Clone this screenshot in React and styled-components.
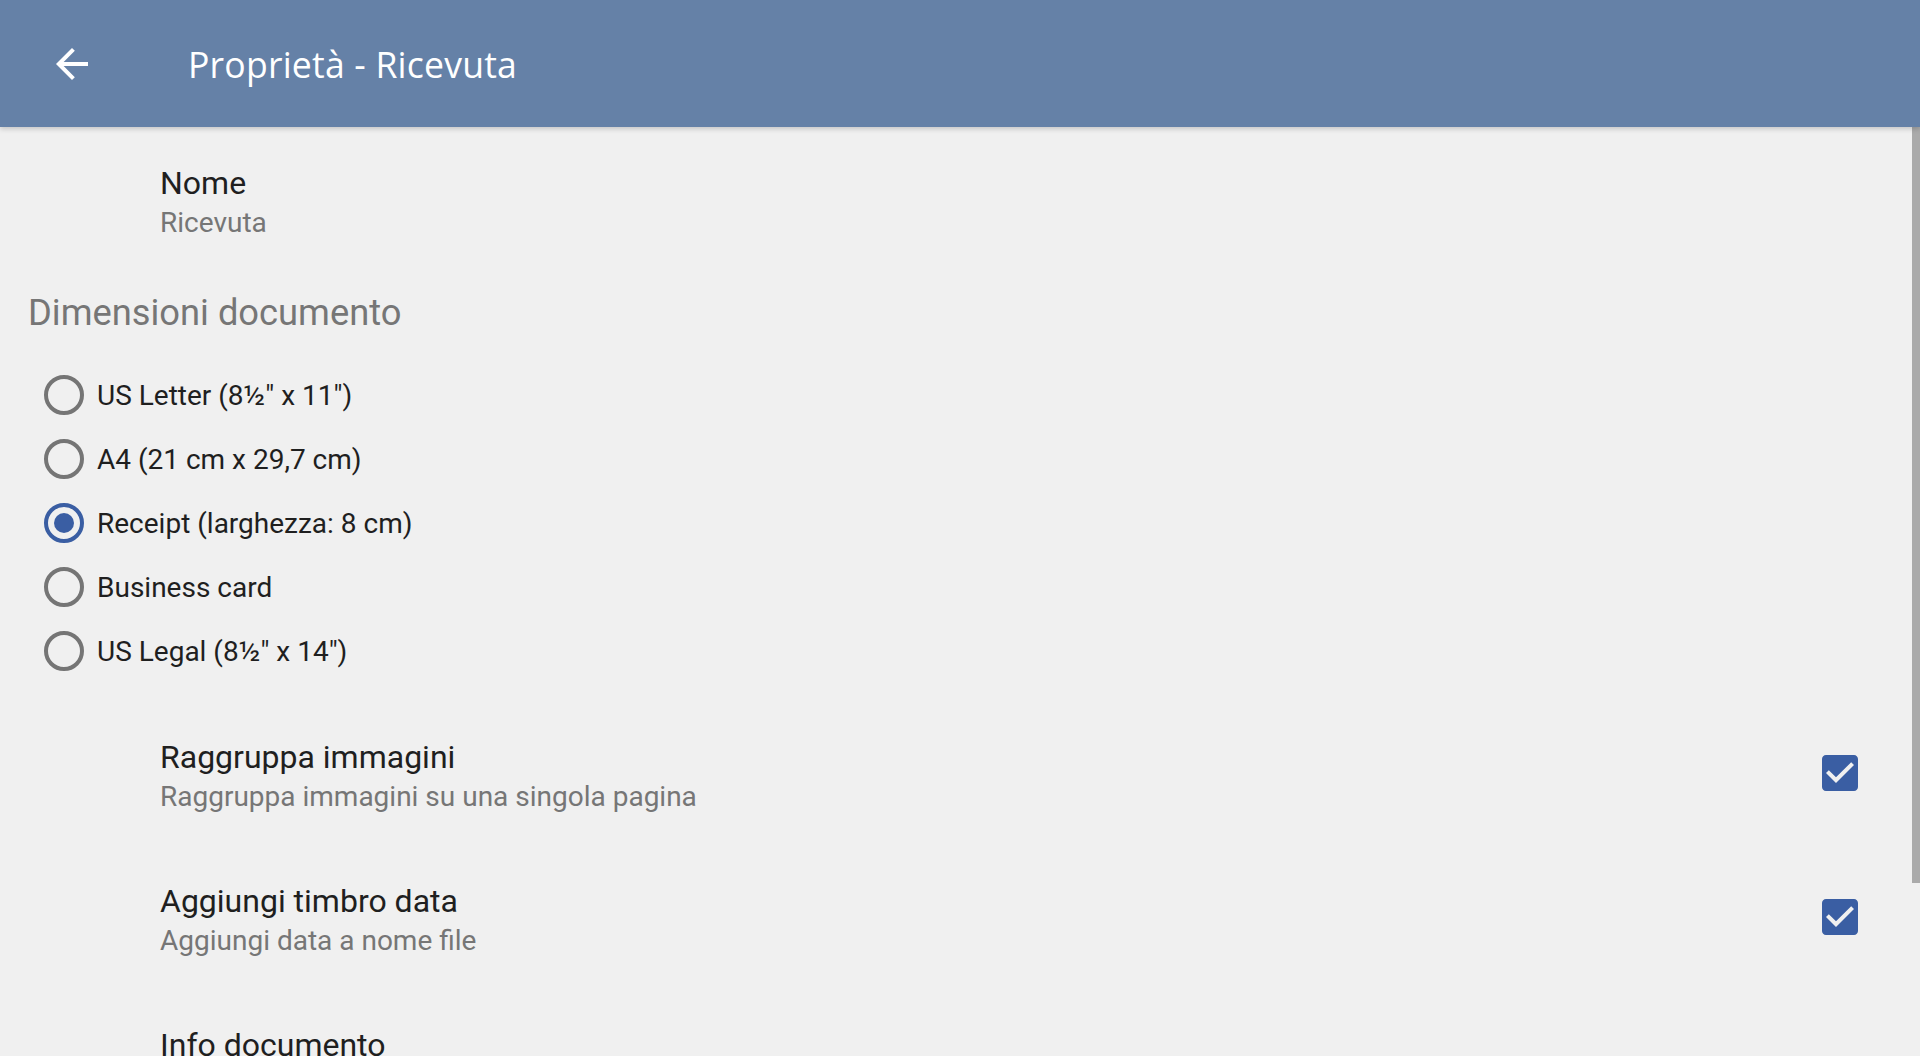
import React from "react";
import styled, { createGlobalStyle } from "styled-components";

const GlobalStyle = createGlobalStyle`
  html, body {
    margin: 0;
    padding: 0;
    height: 100%;
    overflow: hidden;
    background: #f0f0f0;
  }
  #root {
    height: 100%;
  }
`;

const Screen = styled.div`
  height: 1056px;
  display: flex;
  flex-direction: column;
  background: #f0f0f0;
  font-family: Roboto, "Noto Sans", sans-serif;
  overflow: hidden;
`;

const Toolbar = styled.header`
  height: 127px;
  flex-shrink: 0;
  display: flex;
  align-items: center;
  background: #6581a7;
  box-shadow: 0 2px 5px rgba(0, 0, 0, 0.18);
  position: relative;
  z-index: 2;
`;

const BackButton = styled.button`
  width: 48px;
  height: 48px;
  margin-left: 48px;
  padding: 0;
  border: 0;
  background: transparent;
  display: flex;
  align-items: center;
  justify-content: center;
  svg {
    width: 48px;
    height: 48px;
    fill: #ffffff;
  }
`;

const Title = styled.h1`
  margin: 0 0 0 92px;
  font-family: "Open Sans", sans-serif;
  font-weight: 400;
  font-size: 35.6px;
  color: #ffffff;
  letter-spacing: 0.2px;
`;

const Body = styled.div`
  flex: 1;
  display: flex;
  min-height: 0;
`;

const List = styled.main`
  flex: 1;
  display: flex;
  flex-direction: column;
  & > * {
    flex-shrink: 0;
  }
`;

const Scrollbar = styled.div`
  width: 8px;
  align-self: flex-start;
  height: 756px;
  background: #aaaaaa;
`;

const PrefRow = styled.div`
  display: flex;
  align-items: center;
  padding: ${(p) => (p.$top ? "36px 48px 0 160px" : "32px 48px 32px 160px")};
  min-height: ${(p) => (p.$top ? "0" : "80px")};
`;

const PrefText = styled.div`
  flex: 1;
  align-self: stretch;
  display: flex;
  flex-direction: column;
`;

const PrefTitle = styled.div`
  font-size: 32px;
  line-height: 40px;
  color: #1f1f1f;
`;

const PrefSummary = styled.div`
  font-size: 28px;
  line-height: 40px;
  color: #767676;
`;

const Category = styled.div`
  padding: 46px 0 0 28px;
  font-size: 36.3px;
  line-height: 48px;
  color: #767676;
`;

const RadioGroup = styled.div`
  display: flex;
  flex-direction: column;
  padding: 26px 0 22px 44px;
`;

const RadioRow = styled.label`
  height: 64px;
  display: flex;
  align-items: center;
  gap: 13px;
  font-size: 28px;
  color: #1f1f1f;
`;

const RadioCircle = styled.span`
  width: 40px;
  height: 40px;
  box-sizing: border-box;
  border-radius: 50%;
  border: 4px solid ${(p) => (p.$checked ? "#3a5ea3" : "#757575")};
  display: flex;
  align-items: center;
  justify-content: center;
  &::after {
    content: "";
    width: 20px;
    height: 20px;
    border-radius: 50%;
    background: ${(p) => (p.$checked ? "#3a5ea3" : "transparent")};
  }
`;

const CheckIcon = styled.svg`
  width: 48px;
  height: 48px;
  margin-top: -8px;
  fill: #3a5ea3;
`;

const sizes = [
  'US Letter (8½" x 11")',
  "A4 (21 cm x 29,7 cm)",
  "Receipt (larghezza: 8 cm)",
  "Business card",
  'US Legal (8½" x 14")',
];

const Checkbox = () => (
  <CheckIcon viewBox="0 0 24 24">
    <path d="M19 3H5c-1.11 0-2 .9-2 2v14c0 1.1.89 2 2 2h14c1.11 0 2-.9 2-2V5c0-1.1-.89-2-2-2zm-9 14l-5-5 1.41-1.41L10 14.17l7.59-7.59L19 8l-9 9z" />
  </CheckIcon>
);

export default function App() {
  return (
    <Screen>
      <GlobalStyle />
      <Toolbar>
        <BackButton aria-label="back">
          <svg viewBox="0 0 24 24">
            <path d="M20 11H7.83l5.59-5.59L12 4l-8 8 8 8 1.41-1.41L7.83 13H20v-2z" />
          </svg>
        </BackButton>
        <Title>Proprietà - Ricevuta</Title>
      </Toolbar>
      <Body>
        <List>
          <PrefRow $top>
            <PrefText>
              <PrefTitle>Nome</PrefTitle>
              <PrefSummary>Ricevuta</PrefSummary>
            </PrefText>
          </PrefRow>
          <Category>Dimensioni documento</Category>
          <RadioGroup>
            {sizes.map((s, i) => (
              <RadioRow key={s}>
                <RadioCircle $checked={i === 2} />
                {s}
              </RadioRow>
            ))}
          </RadioGroup>
          <PrefRow>
            <PrefText>
              <PrefTitle>Raggruppa immagini</PrefTitle>
              <PrefSummary>Raggruppa immagini su una singola pagina</PrefSummary>
            </PrefText>
            <Checkbox />
          </PrefRow>
          <PrefRow>
            <PrefText>
              <PrefTitle>Aggiungi timbro data</PrefTitle>
              <PrefSummary>Aggiungi data a nome file</PrefSummary>
            </PrefText>
            <Checkbox />
          </PrefRow>
          <PrefRow>
            <PrefText>
              <PrefTitle>Info documento</PrefTitle>
            </PrefText>
          </PrefRow>
        </List>
        <Scrollbar />
      </Body>
    </Screen>
  );
}
